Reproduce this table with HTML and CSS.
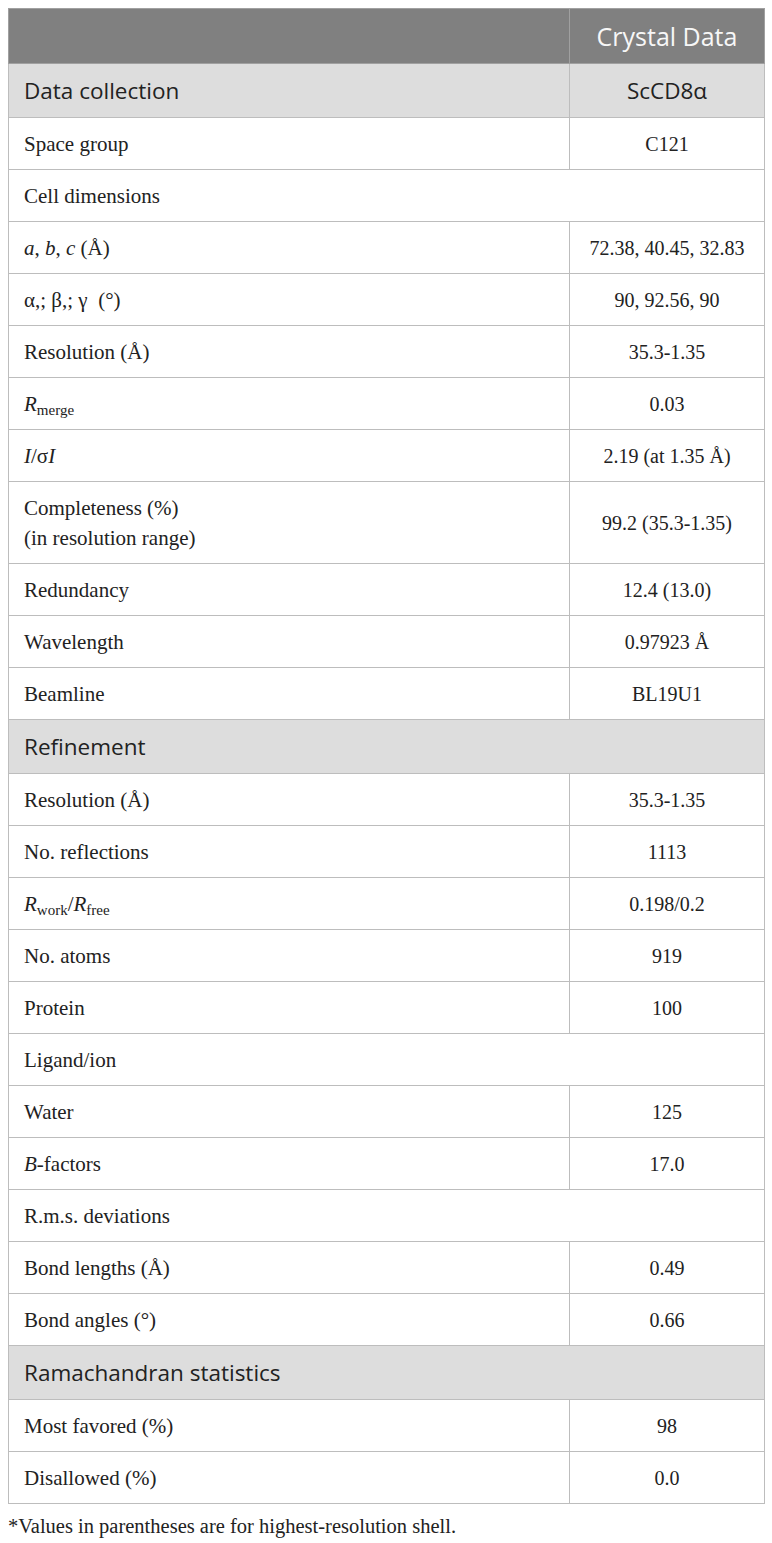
FILE: index.html
```html
<!DOCTYPE html>
<html>
<head>
<meta charset="utf-8">
<link rel="stylesheet" href="styles.css">
</head>
<body>
<table class="data-table">
  <colgroup><col class="col-label"><col class="col-value"></colgroup>
  <thead>
    <tr class="head-row"><th></th><th class="center">Crystal Data</th></tr>
  </thead>
  <tbody>
    <tr class="section"><td>Data collection</td><td class="center">ScCD8α</td></tr>
    <tr><td>Space group</td><td class="center">C121</td></tr>
    <tr><td colspan="2">Cell dimensions</td></tr>
    <tr><td><i>a</i>, <i>b</i>, <i>c</i> (Å)</td><td class="center">72.38, 40.45, 32.83</td></tr>
    <tr><td>α,; β,; γ &nbsp;(°)</td><td class="center">90, 92.56, 90</td></tr>
    <tr><td>Resolution (Å)</td><td class="center">35.3-1.35</td></tr>
    <tr><td><i>R</i><sub>merge</sub></td><td class="center">0.03</td></tr>
    <tr><td><i>I</i>/σ<i>I</i></td><td class="center">2.19 (at 1.35 Å)</td></tr>
    <tr><td>Completeness (%)<br>(in resolution range)</td><td class="center">99.2 (35.3-1.35)</td></tr>
    <tr><td>Redundancy</td><td class="center">12.4 (13.0)</td></tr>
    <tr><td>Wavelength</td><td class="center">0.97923 Å</td></tr>
    <tr><td>Beamline</td><td class="center">BL19U1</td></tr>
    <tr class="section"><td colspan="2">Refinement</td></tr>
    <tr><td>Resolution (Å)</td><td class="center">35.3-1.35</td></tr>
    <tr><td>No. reflections</td><td class="center">1113</td></tr>
    <tr><td><i>R</i><sub>work</sub>/<i>R</i><sub>free</sub></td><td class="center">0.198/0.2</td></tr>
    <tr><td>No. atoms</td><td class="center">919</td></tr>
    <tr><td>Protein</td><td class="center">100</td></tr>
    <tr><td colspan="2">Ligand/ion</td></tr>
    <tr><td>Water</td><td class="center">125</td></tr>
    <tr><td><i>B</i>-factors</td><td class="center">17.0</td></tr>
    <tr><td colspan="2">R.m.s. deviations</td></tr>
    <tr><td>Bond lengths (Å)</td><td class="center">0.49</td></tr>
    <tr><td>Bond angles (°)</td><td class="center">0.66</td></tr>
    <tr class="section"><td colspan="2">Ramachandran statistics</td></tr>
    <tr><td>Most favored (%)</td><td class="center">98</td></tr>
    <tr><td>Disallowed (%)</td><td class="center">0.0</td></tr>
  </tbody>
</table>
<p class="footnote">*Values in parentheses are for highest-resolution shell.</p>
</body>
</html>
```
FILE: styles.css
```css
html, body {
  margin: 0;
  padding: 0;
  background: #ffffff;
}
body {
  padding: 8px;
  font-family: "Liberation Serif", "Times New Roman", serif;
  color: #222222;
}
.data-table {
  width: 756px;
  border-collapse: collapse;
  table-layout: fixed;
  font-size: 21px;
}
.col-label { width: 561px; }
.col-value { width: 195px; }
.data-table td,
.data-table th {
  border: 1px solid #bdbdbd;
  padding: 10.5px 15px;
  line-height: 30px;
  text-align: left;
  font-weight: normal;
  vertical-align: middle;
}
.data-table .center {
  text-align: center;
  white-space: nowrap;
  padding-left: 4px;
  padding-right: 4px;
  font-size: 20px;
}
.head-row th {
  background: #808080;
  color: #f7f7f7;
  font-family: "Open Sans", "Noto Sans", sans-serif;
  font-size: 25px;
  padding: 12px 15px;
  border-color: #a0a0a0;
}
.data-table .head-row th.center { font-size: 25px; }
.section td {
  background: #dddddd;
  font-family: "Open Sans", "Noto Sans", sans-serif;
  font-size: 22.5px;
  padding: 11.5px 15px;
  line-height: 30px;
  color: #222;
}
.data-table .section td.center { font-size: 22.5px; }
sub {
  font-size: 15px;
  line-height: 0;
  vertical-align: -4px;
}
.footnote {
  margin: 10px 0 0 0;
  font-size: 20.5px;
  line-height: 24px;
  color: #222222;
}
```
